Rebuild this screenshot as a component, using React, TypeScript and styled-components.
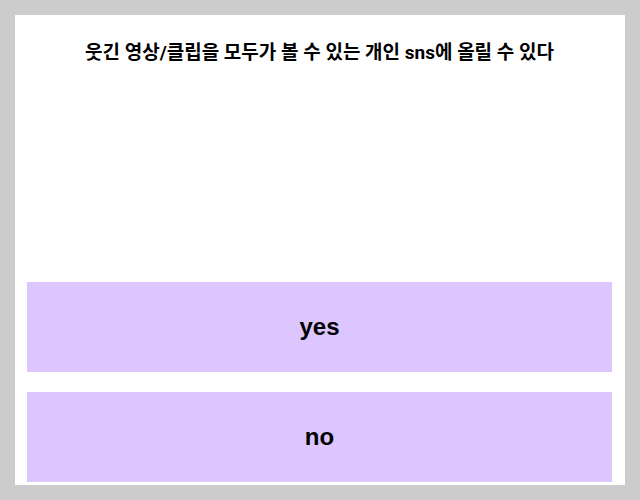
import React from 'react';
import styled, { createGlobalStyle } from 'styled-components';

const GlobalStyle = createGlobalStyle`
  body {
    margin: 0;
    background-color: #cccccc;
    font-family: Roboto, "Noto Sans CJK KR", sans-serif;
  }
`;

const Page = styled.div`
  width: 640px;
  height: 500px;
  padding: 15px;
  box-sizing: border-box;
`;

const Card = styled.div`
  background-color: #ffffff;
  height: 470px;
  padding: 0 13px 3px 12px;
  box-sizing: border-box;
  display: flex;
  flex-direction: column;
`;

const Question = styled.h2`
  margin: 0;
  padding-top: 25px;
  flex: 1;
  text-align: center;
  font-size: 19px;
  line-height: 26px;
  font-weight: 700;
  color: #000000;
`;

const Choices = styled.div`
  display: flex;
  flex-direction: column;
  gap: 20px;
`;

const Choice = styled.button`
  height: 90px;
  border: none;
  background-color: #ddc5fd;
  font-family: "Liberation Sans", Arial, sans-serif;
  font-size: 24px;
  font-weight: 700;
  color: #000000;
  cursor: pointer;
`;

export default function App() {
  const question = '웃긴 영상/클립을 모두가 볼 수 있는 개인 sns에 올릴 수 있다';
  return (
    <>
      <GlobalStyle />
      <Page>
        <Card>
          <Question>{question}</Question>
          <Choices>
            <Choice>yes</Choice>
            <Choice>no</Choice>
          </Choices>
        </Card>
      </Page>
    </>
  );
}
